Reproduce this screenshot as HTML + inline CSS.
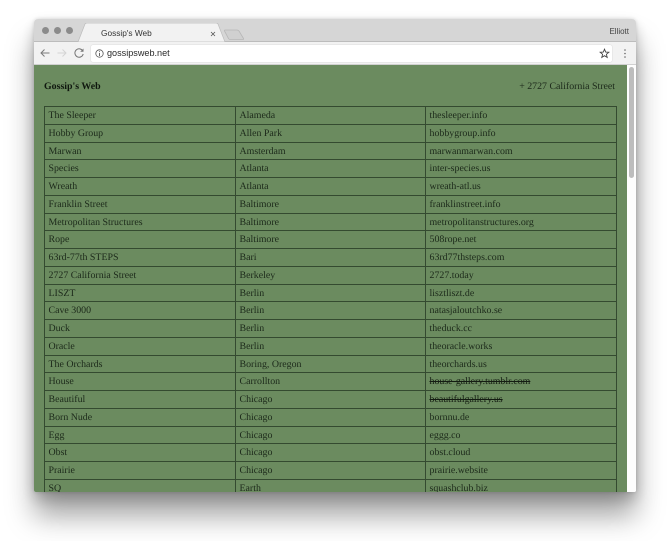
<!DOCTYPE html>
<html><head><meta charset="utf-8"><style>
html,body{margin:0;padding:0;width:670px;height:541px;background:#fff;overflow:hidden}
#win{position:absolute;left:34px;top:19px;width:602px;height:473px;border-radius:4px 4px 2px 2px;overflow:hidden;background:#fff;box-shadow:0 24px 28px rgba(0,0,0,.36),0 6px 14px rgba(0,0,0,.2),0 0 4px rgba(0,0,0,.15);filter:blur(.3px)}
#tabs{position:absolute;left:0;top:0;width:602px;height:23px;background:#d6d6d6;border-bottom:1px solid #bcbcbc;box-sizing:border-box}
.dot{position:absolute;top:8px;width:7px;height:7px;border-radius:50%;background:#8b8b8b}
#bar{position:absolute;left:0;top:23px;width:602px;height:23px;background:#f2f2f2;border-bottom:1px solid #d0d0d0;box-sizing:border-box}
#url{position:absolute;left:57px;top:3px;width:521px;height:17px;background:#fff;border-radius:2px;box-shadow:0 0 1px rgba(0,0,0,.25)}
.ui{font-family:"Liberation Sans",sans-serif;color:#333;position:absolute;white-space:nowrap}
#page{position:absolute;left:0;top:46px;width:593px;height:427px;background:#6b8b5f;overflow:hidden;font-family:"Liberation Serif",serif;font-size:9.9px;color:#1c291a;text-rendering:geometricPrecision}
#sb{position:absolute;left:593px;top:46px;width:9px;height:427px;background:#fdfdfd}
#th{position:absolute;left:2px;top:2px;width:5px;height:111px;background:#bdbdbd;border-radius:3px}
table{position:absolute;left:10px;top:41px;width:572px;border-collapse:collapse;table-layout:fixed}
td{border:1px solid #344a30;height:16.75px;padding:1px 0 0 3.5px;line-height:15.5px;box-sizing:border-box;white-space:nowrap;overflow:hidden;font-size:9.9px}
tr{height:17.75px}
s{color:#141c12}
</style></head><body>
<div id="win">
 <div id="tabs">
  <div class="dot" style="left:8px"></div><div class="dot" style="left:20px"></div><div class="dot" style="left:32px"></div>
  <svg style="position:absolute;left:40px;top:4px" width="170" height="20"><path d="M4 19 L11 1 Q11.500 0 13 0 H142 Q143.500 0 144 1 L151 19 Z" fill="#f2f2f2" stroke="#bcbcbc" stroke-width=".7"/></svg>
  <svg style="position:absolute;left:188px;top:10px" width="26" height="12"><path d="M3 1 H15 Q16 1 17 2 L21.500 9.500 Q22 10.500 21 10.500 H8 Q7 10.500 6.500 9.500 L2.500 2 Q2.300 1 3 1 Z" fill="#d0d0d0" stroke="#b6b6b6" stroke-width=".8"/></svg>
  <div class="ui" style="left:67px;top:9px;font-size:8.300px;line-height:11px">Gossip's Web</div>
  <svg style="position:absolute;left:176px;top:12px" width="6" height="6"><path d="M1 1 L5 5 M5 1 L1 5" stroke="#555" stroke-width=".8"/></svg>
  <div class="ui" style="right:7px;top:7px;font-size:8px;line-height:11px;color:#444">Elliott</div>
 </div>
 <div id="bar">
  <svg style="position:absolute;left:5px;top:5px" width="12" height="12"><path d="M10.500 6 H2 M5.500 2.500 L2 6 L5.500 9.500" fill="none" stroke="#7a7a7a" stroke-width="1"/></svg>
  <svg style="position:absolute;left:22px;top:5px" width="12" height="12"><path d="M1.500 6 H10 M6.500 2.500 L10 6 L6.500 9.500" fill="none" stroke="#d4d4d4" stroke-width="1"/></svg>
  <svg style="position:absolute;left:39px;top:5px" width="12" height="12"><path d="M9.800 4 A4.200 4.200 0 1 0 10.200 7" fill="none" stroke="#777" stroke-width="1"/><path d="M10.500 1.500 V4.800 H7.200 Z" fill="#777"/></svg>
  <div id="url">
   <svg style="position:absolute;left:4px;top:4px" width="9" height="9"><circle cx="4.500" cy="4.500" r="3.700" fill="none" stroke="#555" stroke-width=".8"/><path d="M4.500 4 V7 M4.500 2.200 V3.100" stroke="#555" stroke-width=".9"/></svg>
   <div class="ui" style="left:16px;top:2px;font-size:9.100px;line-height:13px;color:#2a2a2a">gossipsweb.net</div>
   <svg style="position:absolute;left:507.500px;top:3px" width="11" height="11"><path d="M5.500 1.200 L6.700 4.100 L9.800 4.300 L7.400 6.300 L8.200 9.400 L5.500 7.700 L2.800 9.400 L3.600 6.300 L1.200 4.300 L4.300 4.100 Z" fill="none" stroke="#444" stroke-width=".9"/></svg>
  </div>
  <svg style="position:absolute;left:589px;top:6px" width="4" height="11"><circle cx="2" cy="2" r=".8" fill="#666"/><circle cx="2" cy="5.500" r=".8" fill="#666"/><circle cx="2" cy="9" r=".8" fill="#666"/></svg>
 </div>
 <div id="page">
  <div style="position:absolute;left:10px;top:15px;font-weight:bold;line-height:13px;color:#0f170e">Gossip's Web</div>
  <div style="position:absolute;right:12px;top:15px;line-height:13px">+ 2727 California Street</div>
  <table><colgroup><col style="width:191px"><col style="width:190px"><col style="width:191px"></colgroup>
  <tr><td>The Sleeper</td><td>Alameda</td><td>thesleeper.info</td></tr>
  <tr><td>Hobby Group</td><td>Allen Park</td><td>hobbygroup.info</td></tr>
  <tr><td>Marwan</td><td>Amsterdam</td><td>marwanmarwan.com</td></tr>
  <tr><td>Species</td><td>Atlanta</td><td>inter-species.us</td></tr>
  <tr><td>Wreath</td><td>Atlanta</td><td>wreath-atl.us</td></tr>
  <tr><td>Franklin Street</td><td>Baltimore</td><td>franklinstreet.info</td></tr>
  <tr><td>Metropolitan Structures</td><td>Baltimore</td><td>metropolitanstructures.org</td></tr>
  <tr><td>Rope</td><td>Baltimore</td><td>508rope.net</td></tr>
  <tr><td>63rd-77th STEPS</td><td>Bari</td><td>63rd77thsteps.com</td></tr>
  <tr><td>2727 California Street</td><td>Berkeley</td><td>2727.today</td></tr>
  <tr><td>LISZT</td><td>Berlin</td><td>lisztliszt.de</td></tr>
  <tr><td>Cave 3000</td><td>Berlin</td><td>natasjaloutchko.se</td></tr>
  <tr><td>Duck</td><td>Berlin</td><td>theduck.cc</td></tr>
  <tr><td>Oracle</td><td>Berlin</td><td>theoracle.works</td></tr>
  <tr><td>The Orchards</td><td>Boring, Oregon</td><td>theorchards.us</td></tr>
  <tr><td>House</td><td>Carrollton</td><td><s>house-gallery.tumblr.com</s></td></tr>
  <tr><td>Beautiful</td><td>Chicago</td><td><s>beautifulgallery.us</s></td></tr>
  <tr><td>Born Nude</td><td>Chicago</td><td>bornnu.de</td></tr>
  <tr><td>Egg</td><td>Chicago</td><td>eggg.co</td></tr>
  <tr><td>Obst</td><td>Chicago</td><td>obst.cloud</td></tr>
  <tr><td>Prairie</td><td>Chicago</td><td>prairie.website</td></tr>
  <tr><td>SQ</td><td>Earth</td><td>squashclub.biz</td></tr>
  </table>
 </div>
 <div id="sb"><div id="th"></div></div>
</div>
</body></html>
